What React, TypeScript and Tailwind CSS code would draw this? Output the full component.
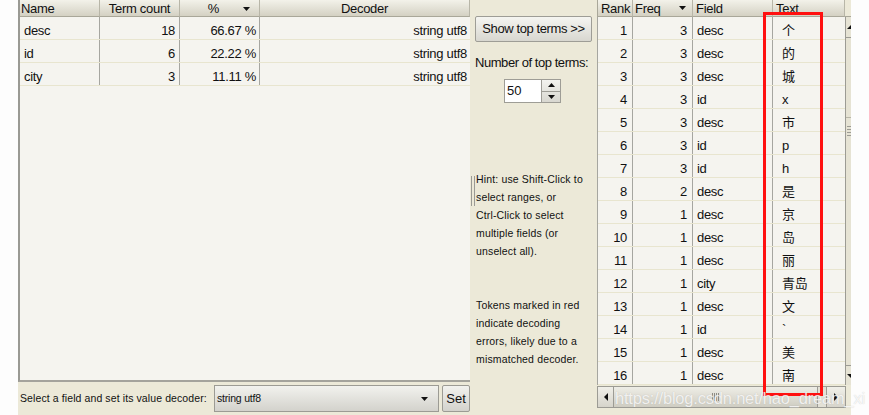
import React from "react";

const F = { fontFamily: '"Liberation Sans", Arial, "Noto Sans CJK SC", sans-serif' } as const;

const leftRows = [
  ["desc", "18", "66.67 %", "string utf8"],
  ["id", "6", "22.22 %", "string utf8"],
  ["city", "3", "11.11 %", "string utf8"],
];

const rightRows: [string, string, string, string][] = [
  ["1", "3", "desc", "个"],
  ["2", "3", "desc", "的"],
  ["3", "3", "desc", "城"],
  ["4", "3", "id", "x"],
  ["5", "3", "desc", "市"],
  ["6", "3", "id", "p"],
  ["7", "3", "id", "h"],
  ["8", "2", "desc", "是"],
  ["9", "1", "desc", "京"],
  ["10", "1", "desc", "岛"],
  ["11", "1", "desc", "丽"],
  ["12", "1", "city", "青岛"],
  ["13", "1", "desc", "文"],
  ["14", "1", "id", "`"],
  ["15", "1", "desc", "美"],
  ["16", "1", "desc", "南"],
];

const hdr =
  "h-[17px] flex items-center bg-gradient-to-b from-[#f3f2ea] to-[#d4d1c3] border-b border-[#a9a799] border-r border-r-[#b8b6a8] text-[13px] text-[#111] leading-none tracking-[-0.3px]";

function Arrow() {
  return (
    <svg width="7" height="4" viewBox="0 0 7 4" className="shrink-0">
      <path d="M0 0h7L3.5 4z" fill="#111" />
    </svg>
  );
}

export default function App() {
  return (
    <div className="w-[869px] h-[415px] bg-[#fdfdfd] flex relative overflow-hidden" style={F}>
      <div className="ml-[18px] w-[833px] h-[415px] bg-[#ece9d8] flex">
        {/* Left panel */}
        <div className="w-[452px] flex flex-col">
          <div className="h-[382px] border-l-2 border-l-[#9a9a94] border-b-2 border-b-[#a4a39c] bg-[#f5f4ef] flex flex-col">
            <div className="flex">
              <div className={`${hdr} w-[80px] pl-[1px]`}>Name</div>
              <div className={`${hdr} w-[80px] justify-center`}>Term count</div>
              <div className={`${hdr} w-[80px] justify-center relative`}>
                <span className="mr-[12px]">%</span>
                <span className="absolute right-[9px] top-[7px]"><Arrow /></span>
              </div>
              <div className={`${hdr} flex-1 justify-center`}>Decoder</div>
            </div>
            {leftRows.map((r, i) => (
              <div key={i} className="flex h-[23px] border-b border-[#e8e5cf] text-[13px] text-[#111] tracking-[-0.3px]">
                <div className="w-[80px] pl-[4px] pt-[5px] flex items-center border-r border-[#a6a6a0]">{r[0]}</div>
                <div className="w-[80px] pr-[4px] pt-[5px] flex items-center justify-end border-r border-[#a6a6a0]">{r[1]}</div>
                <div className="w-[80px] pr-[3px] pt-[5px] flex items-center justify-end border-r border-[#a6a6a0]">{r[2]}</div>
                <div className="flex-1 pr-[3px] pt-[5px] flex items-center justify-end">{r[3]}</div>
              </div>
            ))}
          </div>
          <div className="flex items-center h-[33px] pl-[2px]">
            <span className="text-[10.5px] text-[#111] w-[194px] tracking-[0.1px]">Select a field and set its value decoder:</span>
            <div className="w-[225px] h-[27px] border border-[#9c9b94] bg-gradient-to-b from-[#f2f2ee] to-[#d3d2cc] flex items-center justify-between px-[2px]">
              <span className="text-[10.5px] text-[#111] tracking-[-0.2px]">string utf8</span>
              <span className="mr-[8px]"><Arrow /></span>
            </div>
            <div className="ml-[3px] w-[28px] h-[27px] border border-[#9c9b94] rounded-[2px] bg-gradient-to-b from-[#f2f2ee] to-[#d3d2cc] flex items-center justify-center text-[13px] text-[#111]">Set</div>
          </div>
        </div>

        {/* Middle panel */}
        <div className="w-[127px] flex flex-col items-start relative">
          <div className="mt-[16px] ml-[5px] w-[117px] h-[26px] border border-[#9e9d96] rounded-[2px] bg-gradient-to-b from-[#f5f5f1] to-[#d8d7d0] flex items-center justify-center text-[13px] text-[#111] tracking-[-0.4px]">
            Show top terms &gt;&gt;
          </div>
          <div className="mt-[13px] ml-[5px] text-[13px] text-[#111] tracking-[-0.45px] leading-[16px]">Number of top terms:</div>
          <div className="mt-[8px] ml-[34px] flex w-[57px] h-[24px] border border-[#9e9d96]">
            <div className="w-[37px] bg-white border-r border-[#9e9d96] flex items-center pl-[2px] text-[13px] text-[#111]">50</div>
            <div className="flex-1 flex flex-col bg-gradient-to-b from-[#f3f3ef] to-[#d8d7d0]">
              <div className="flex-1 flex items-center justify-center border-b border-[#9e9d96]">
                <svg width="7" height="4" viewBox="0 0 7 4"><path d="M0 4h7L3.5 0z" fill="#111" /></svg>
              </div>
              <div className="flex-1 flex items-center justify-center">
                <Arrow />
              </div>
            </div>
          </div>
          <div className="mt-[67px] ml-[1px] flex">
            <div className="w-[4px] h-[30px] mt-[6px] border-l border-r border-[#9a9a94]" />
            <div className="ml-[1px] text-[10.5px] leading-[18px] text-[#111] tracking-[0.15px]">
              <div>Hint: use Shift-Click to</div>
              <div>select ranges, or</div>
              <div>Ctrl-Click to select</div>
              <div>multiple fields (or</div>
              <div>unselect all).</div>
            </div>
          </div>
          <div className="mt-[36px] ml-[6px] text-[10.5px] leading-[18px] text-[#111] tracking-[0.15px]">
            <div>Tokens marked in red</div>
            <div>indicate decoding</div>
            <div>errors, likely due to a</div>
            <div>mismatched decoder.</div>
          </div>
        </div>

        {/* Right panel */}
        <div className="w-[254px] flex flex-col">
          <div className="flex">
            <div className={`${hdr} w-[36px] pl-[3px] border-l border-l-[#a9a799]`}>Rank</div>
            <div className={`${hdr} w-[60px] pl-[2px] justify-between pr-[6px]`}>
              <span>Freq</span>
              <Arrow />
            </div>
            <div className={`${hdr} w-[80px] pl-[3px]`}>Field</div>
            <div className={`${hdr} w-[72px] pl-[3px]`}>Text</div>
            <div className="w-[6px] h-[17px] bg-[#ece9d8] border-b border-[#a9a799]" />
          </div>
          <div className="flex">
            <div className="w-[248px] bg-[#f5f4ef] border-l border-[#a6a6a0]">
              {rightRows.map((r, i) => (
                <div key={i} className="flex h-[23px] border-b border-[#e8e5cf] text-[13px] text-[#111] tracking-[-0.3px]">
                  <div className="w-[35px] pr-[5px] pt-[5px] flex items-center justify-end border-r border-[#a6a6a0]">{r[0]}</div>
                  <div className="w-[60px] pr-[5px] pt-[5px] flex items-center justify-end border-r border-[#a6a6a0]">{r[1]}</div>
                  <div className="w-[80px] pl-[4px] pt-[5px] flex items-center border-r border-[#a6a6a0]">{r[2]}</div>
                  <div className="flex-1 pl-[9px] pt-[5px] flex items-center" style={{ fontFamily: '"Liberation Sans", "Noto Sans CJK SC", sans-serif' }}>{r[3]}</div>
                </div>
              ))}
            </div>
            <div className="w-[6px] flex flex-col bg-[#e6e3d4] border-l border-[#9c9b94]">
              <div className="h-[21px] border-b border-[#9c9b94] relative overflow-hidden">
                <div className="absolute left-[1px] top-[8px] w-0 h-0 border-l-[4px] border-r-[4px] border-b-[4px] border-l-transparent border-r-transparent border-b-[#111]" />
              </div>
              <div className="h-[80px] border-b border-[#b8b6a8]" />
              <div className="flex flex-col gap-[2px] mt-[8px] pl-[1px]">
                <div className="h-px bg-[#9c9b94]" />
                <div className="h-px bg-[#9c9b94]" />
                <div className="h-px bg-[#9c9b94]" />
                <div className="h-px bg-[#9c9b94]" />
              </div>
              <div className="flex-1" />
              <div className="h-[20px] border-t border-[#9c9b94] relative overflow-hidden">
                <div className="absolute left-[1px] top-[8px] w-0 h-0 border-l-[4px] border-r-[4px] border-t-[4px] border-l-transparent border-r-transparent border-t-[#111]" />
              </div>
            </div>
          </div>
          <div className="flex h-[22px] mt-[1px] border border-[#9c9b94] w-[249px] bg-[#e3e1d6]">
            <div className="w-[16px] border-r border-[#9c9b94] flex items-center justify-center bg-gradient-to-b from-[#f0efe9] to-[#d6d4cb]">
              <div className="w-0 h-0 border-t-[4px] border-b-[4px] border-r-[4px] border-t-transparent border-b-transparent border-r-[#111]" />
            </div>
            <div className="w-[204px] border-r border-[#9c9b94] bg-gradient-to-b from-[#eeede6] to-[#cfcdc2] flex items-center justify-center">
              <div className="flex gap-[1px] h-[8px]">
                <div className="w-px bg-[#8c8b84]" />
                <div className="w-px bg-[#8c8b84]" />
                <div className="w-px bg-[#8c8b84]" />
                <div className="w-px bg-[#8c8b84]" />
              </div>
            </div>
            <div className="w-[8px]" />
            <div className="flex-1 border-l border-[#9c9b94] flex items-center justify-center bg-gradient-to-b from-[#f0efe9] to-[#d6d4cb]">
              <div className="w-0 h-0 border-t-[4px] border-b-[4px] border-l-[4px] border-t-transparent border-b-transparent border-l-[#111]" />
            </div>
          </div>
        </div>
      </div>

      {/* Red highlight box */}
      <div className="absolute left-[763px] top-[12px] w-[60px] h-[384px] border-[3px] border-[#ff1010] pointer-events-none" />

      {/* Watermark */}
      <div className="absolute left-[615px] top-[387px] whitespace-nowrap text-[16.5px] leading-[22px] text-white/80 pointer-events-none tracking-[-0.2px]" style={{ fontFamily: '"Liberation Sans", Arial, sans-serif', textShadow: "0 0 1px rgba(120,120,120,0.4)" }}>
        https://blog.csdn.net/hao_dream_xi
      </div>
    </div>
  );
}
